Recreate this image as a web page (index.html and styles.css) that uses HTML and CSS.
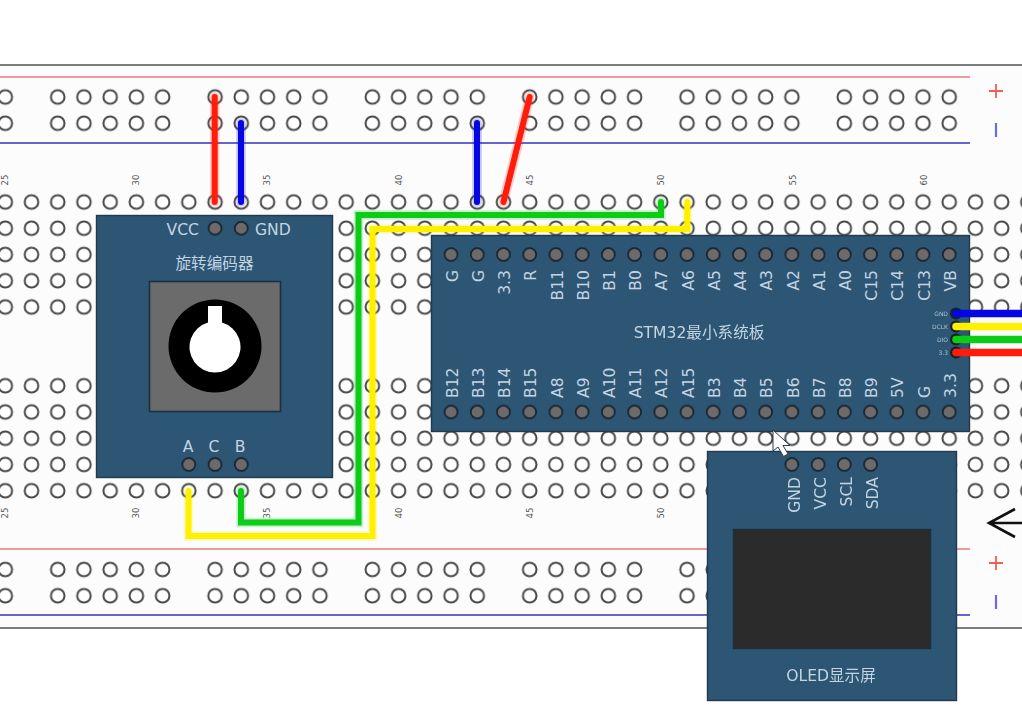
FILE: index.html
```html
<!DOCTYPE html>
<html lang="zh">
<head>
<meta charset="utf-8">
<title>STM32 breadboard wiring</title>
<link rel="stylesheet" href="styles.css">
</head>
<body>
<svg class="canvas" width="1022" height="725" viewBox="0 0 1022 725" xmlns="http://www.w3.org/2000/svg">
  <defs>
    <pattern id="hole" patternUnits="userSpaceOnUse" x="-7.81" y="188.875" width="26.22" height="26.25">
      <circle class="hole" cx="13.11" cy="13.125" r="6.8"/>
    </pattern>
    <pattern id="pin" patternUnits="userSpaceOnUse" x="-7.81" y="188.875" width="26.22" height="26.25">
      <circle class="pin" cx="13.11" cy="13.125" r="6.5"/>
    </pattern>
  </defs>

  <!-- breadboard -->
  <rect class="board" x="-4" y="65" width="1030" height="563"/>
  <line class="rail-red" x1="0" y1="77" x2="970" y2="77"/>
  <line class="rail-blue" x1="0" y1="143" x2="970" y2="143"/>
  <line class="rail-red" x1="0" y1="549" x2="970" y2="549"/>
  <line class="rail-blue" x1="0" y1="615" x2="970" y2="615"/>

  <path class="sign-red" d="M989 91H1003M996 84V98"/>
  <path class="sign-blue" d="M996 123V137"/>
  <path class="sign-red" d="M989 563H1003M996 556V570"/>
  <path class="sign-blue" d="M996 595V609"/>

  <!-- top rail holes -->
  <rect fill="url(#hole)" x="-7.81" y="83.875" width="26.22" height="52.5"/>
  <rect fill="url(#hole)" x="44.63" y="83.875" width="131.1" height="52.5"/>
  <rect fill="url(#hole)" x="201.95" y="83.875" width="131.1" height="52.5"/>
  <rect fill="url(#hole)" x="359.27" y="83.875" width="131.1" height="52.5"/>
  <rect fill="url(#hole)" x="516.59" y="83.875" width="131.1" height="52.5"/>
  <rect fill="url(#hole)" x="673.91" y="83.875" width="131.1" height="52.5"/>
  <rect fill="url(#hole)" x="831.23" y="83.875" width="131.1" height="52.5"/>

  <!-- main holes -->
  <rect fill="url(#hole)" x="-7.81" y="188.875" width="1030" height="131.25"/>
  <rect fill="url(#hole)" x="-7.81" y="372.625" width="1030" height="131.25"/>

  <!-- bottom rail holes -->
  <rect fill="url(#hole)" x="-7.81" y="556.375" width="26.22" height="52.5"/>
  <rect fill="url(#hole)" x="44.63" y="556.375" width="131.1" height="52.5"/>
  <rect fill="url(#hole)" x="201.95" y="556.375" width="131.1" height="52.5"/>
  <rect fill="url(#hole)" x="359.27" y="556.375" width="131.1" height="52.5"/>
  <rect fill="url(#hole)" x="516.59" y="556.375" width="131.1" height="52.5"/>
  <rect fill="url(#hole)" x="673.91" y="556.375" width="131.1" height="52.5"/>

  <!-- column numbers -->
  <g class="num">
    <text transform="translate(8 180) rotate(-90)">25</text>
    <text transform="translate(139 180) rotate(-90)">30</text>
    <text transform="translate(270 180) rotate(-90)">35</text>
    <text transform="translate(402 180) rotate(-90)">40</text>
    <text transform="translate(533 180) rotate(-90)">45</text>
    <text transform="translate(664 180) rotate(-90)">50</text>
    <text transform="translate(796 180) rotate(-90)">55</text>
    <text transform="translate(927 180) rotate(-90)">60</text>
    <text transform="translate(8 513) rotate(-90)">25</text>
    <text transform="translate(139 513) rotate(-90)">30</text>
    <text transform="translate(270 513) rotate(-90)">35</text>
    <text transform="translate(402 513) rotate(-90)">40</text>
    <text transform="translate(533 513) rotate(-90)">45</text>
    <text transform="translate(664 513) rotate(-90)">50</text>
  </g>

  <!-- rotary encoder -->
  <rect class="module" x="96.5" y="215.5" width="236" height="262"/>
  <rect fill="url(#pin)" x="201.95" y="215" width="52.44" height="26"/>
  <rect fill="url(#pin)" x="175.73" y="451.5" width="78.66" height="26"/>
  <text class="label end" x="199" y="234.5">VCC</text>
  <text class="label" x="255" y="234.5">GND</text>
  <text class="label mid" x="214.5" y="268.5">旋转编码器</text>
  <rect class="knob-base" x="149.5" y="281.5" width="131" height="130"/>
  <circle class="knob" cx="215" cy="346" r="46.5"/>
  <path class="knob-hole" d="M208 306H222V322.5A25.5 25.5 0 1 1 208 322.5Z"/>
  <text class="label mid" x="188" y="451.5">A</text>
  <text class="label mid" x="214" y="451.5">C</text>
  <text class="label mid" x="240" y="451.5">B</text>

  <!-- STM32 board -->
  <rect class="module" x="431.5" y="235.5" width="538" height="196"/>
  <rect fill="url(#pin)" x="437.93" y="241" width="524.4" height="26"/>
  <rect fill="url(#pin)" x="437.93" y="399" width="524.4" height="26"/>
  <g class="label end">
    <text transform="translate(457.5 270) rotate(-90)">G</text>
    <text transform="translate(483.5 270) rotate(-90)">G</text>
    <text transform="translate(509.5 270) rotate(-90)">3.3</text>
    <text transform="translate(536 270) rotate(-90)">R</text>
    <text transform="translate(562.5 270) rotate(-90)">B11</text>
    <text transform="translate(588.5 270) rotate(-90)">B10</text>
    <text transform="translate(614.5 270) rotate(-90)">B1</text>
    <text transform="translate(641 270) rotate(-90)">B0</text>
    <text transform="translate(667 270) rotate(-90)">A7</text>
    <text transform="translate(693.5 270) rotate(-90)">A6</text>
    <text transform="translate(719.5 270) rotate(-90)">A5</text>
    <text transform="translate(746 270) rotate(-90)">A4</text>
    <text transform="translate(772 270) rotate(-90)">A3</text>
    <text transform="translate(798.5 270) rotate(-90)">A2</text>
    <text transform="translate(824.5 270) rotate(-90)">A1</text>
    <text transform="translate(850.5 270) rotate(-90)">A0</text>
    <text transform="translate(877 270) rotate(-90)">C15</text>
    <text transform="translate(903 270) rotate(-90)">C14</text>
    <text transform="translate(929.5 270) rotate(-90)">C13</text>
    <text transform="translate(955.5 270) rotate(-90)">VB</text>
  </g>
  <g class="label">
    <text transform="translate(457.5 398) rotate(-90)">B12</text>
    <text transform="translate(483.5 398) rotate(-90)">B13</text>
    <text transform="translate(509.5 398) rotate(-90)">B14</text>
    <text transform="translate(536 398) rotate(-90)">B15</text>
    <text transform="translate(562.5 398) rotate(-90)">A8</text>
    <text transform="translate(588.5 398) rotate(-90)">A9</text>
    <text transform="translate(614.5 398) rotate(-90)">A10</text>
    <text transform="translate(641 398) rotate(-90)">A11</text>
    <text transform="translate(667 398) rotate(-90)">A12</text>
    <text transform="translate(693.5 398) rotate(-90)">A15</text>
    <text transform="translate(719.5 398) rotate(-90)">B3</text>
    <text transform="translate(746 398) rotate(-90)">B4</text>
    <text transform="translate(772 398) rotate(-90)">B5</text>
    <text transform="translate(798.5 398) rotate(-90)">B6</text>
    <text transform="translate(824.5 398) rotate(-90)">B7</text>
    <text transform="translate(850.5 398) rotate(-90)">B8</text>
    <text transform="translate(877 398) rotate(-90)">B9</text>
    <text transform="translate(903 398) rotate(-90)">5V</text>
    <text transform="translate(929.5 398) rotate(-90)">G</text>
    <text transform="translate(955.5 398) rotate(-90)">3.3</text>
  </g>
  <text class="label mid" x="699" y="338">STM32最小系统板</text>

  <!-- side connector -->
  <g class="tiny end">
    <text x="948" y="316">GND</text>
    <text x="948" y="329">DCLK</text>
    <text x="948" y="342">DIO</text>
    <text x="948" y="355">3.3</text>
  </g>
  <g class="side-pins">
    <circle cx="956" cy="313.5" r="6"/>
    <circle cx="956" cy="326.5" r="6"/>
    <circle cx="956" cy="339.5" r="6"/>
    <circle cx="956" cy="352.5" r="6"/>
  </g>

  <!-- OLED -->
  <rect class="module" x="707.5" y="451.5" width="249" height="249"/>
  <rect fill="url(#pin)" x="778.79" y="451.5" width="104.88" height="26"/>
  <g class="label end">
    <text transform="translate(799.5 477) rotate(-90)">GND</text>
    <text transform="translate(825.5 477) rotate(-90)">VCC</text>
    <text transform="translate(851.5 477) rotate(-90)">SCL</text>
    <text transform="translate(877.5 477) rotate(-90)">SDA</text>
  </g>
  <rect class="screen" x="733.5" y="529.5" width="197" height="119"/>
  <text class="label mid" x="831" y="681">OLED显示屏</text>

  <!-- wires -->
  <g class="halo">
    <path class="w-red" d="M214.7 202V97"/>
    <path class="w-blue" d="M241 202V123"/>
    <path class="w-blue" d="M477 202V123"/>
    <path class="w-red" d="M503.5 202L529.7 97"/>
    <path class="w-green" d="M661 202V215H358.5V522.5H241V491"/>
    <path class="w-yellow" d="M687.3 202V229H372.5V536H188.5V491"/>
  </g>
  <g class="wire">
    <path class="w-red" d="M214.7 202V97"/>
    <path class="w-blue" d="M241 202V123"/>
    <path class="w-blue" d="M477 202V123"/>
    <path class="w-red" d="M503.5 202L529.7 97"/>
    <path class="w-green" d="M661 202V215H358.5V522.5H241V491"/>
    <path class="w-yellow" d="M687.3 202V229H372.5V536H188.5V491"/>
  </g>
  <g class="wire-thick">
    <path class="w-blue" d="M956 313.5H1030"/>
    <path class="w-yellow" d="M956 326.5H1030"/>
    <path class="w-green" d="M956 339.5H1030"/>
    <path class="w-red" d="M956 352.5H1030"/>
  </g>

  <!-- overlay: arrow annotation and mouse pointer -->
  <path class="arrow" d="M1030 523H989M1015 509L989 523L1015 537"/>
  <path class="cursor" d="M773 430V451L778 447L783.5 456.5L788 454L783 445.5H790Z"/>
</svg>
</body>
</html>
```

FILE: styles.css
```css
html, body {
  margin: 0;
  padding: 0;
  background: #ffffff;
  overflow: hidden;
}

.canvas {
  display: block;
  filter: blur(0.6px);
  font-family: "DejaVu Sans", "Noto Sans CJK SC", sans-serif;
}

.board {
  fill: #fcfcfd;
  stroke: #7c7c7c;
  stroke-width: 2;
}

.rail-red {
  stroke: #e57c78;
  stroke-width: 1.6;
}

.rail-blue {
  stroke: #3434b8;
  stroke-width: 1.5;
}

.sign-red {
  fill: none;
  stroke: #ee5f56;
  stroke-width: 1.8;
}

.sign-blue {
  fill: none;
  stroke: #6c6ce2;
  stroke-width: 2.2;
}

.hole {
  fill: #ffffff;
  stroke: #484848;
  stroke-width: 2;
}

.pin {
  fill: #6e6a6a;
  stroke: #14222e;
  stroke-width: 1.7;
}

.num text {
  font-size: 8.5px;
  fill: #555555;
  text-anchor: middle;
}

.module {
  fill: #2d5674;
  stroke: #223a4c;
  stroke-width: 1.4;
}

.label {
  font-size: 15.6px;
  fill: #c3d4e2;
}

.end,
.end text {
  text-anchor: end;
}

.mid {
  text-anchor: middle;
}

.tiny text {
  font-size: 6px;
  fill: #a9c0d0;
}

.knob-base {
  fill: #6b6b6b;
  stroke: #1a2f40;
  stroke-width: 1.6;
}

.knob {
  fill: #000000;
}

.knob-hole {
  fill: #ffffff;
}

.screen {
  fill: #2b2b2b;
  stroke: #1b2f3f;
  stroke-width: 1.4;
}

.side-pins circle {
  fill: #14222c;
}

.halo path,
.wire path,
.wire-thick path {
  fill: none;
  stroke-linecap: round;
  stroke-linejoin: miter;
}

.wire path {
  stroke-width: 6;
}

.wire-thick path {
  stroke-width: 7.5;
}

.halo path {
  stroke-width: 9.5;
  opacity: 0.22;
}

.w-red {
  stroke: #ff1c0a;
}

.w-blue {
  stroke: #0606e4;
}

.w-green {
  stroke: #0ccc18;
}

.w-yellow {
  stroke: #fff000;
}

.arrow {
  fill: none;
  stroke: #111111;
  stroke-width: 2.6;
}

.cursor {
  fill: #ffffff;
  stroke: #2a3a48;
  stroke-width: 1;
}
```
